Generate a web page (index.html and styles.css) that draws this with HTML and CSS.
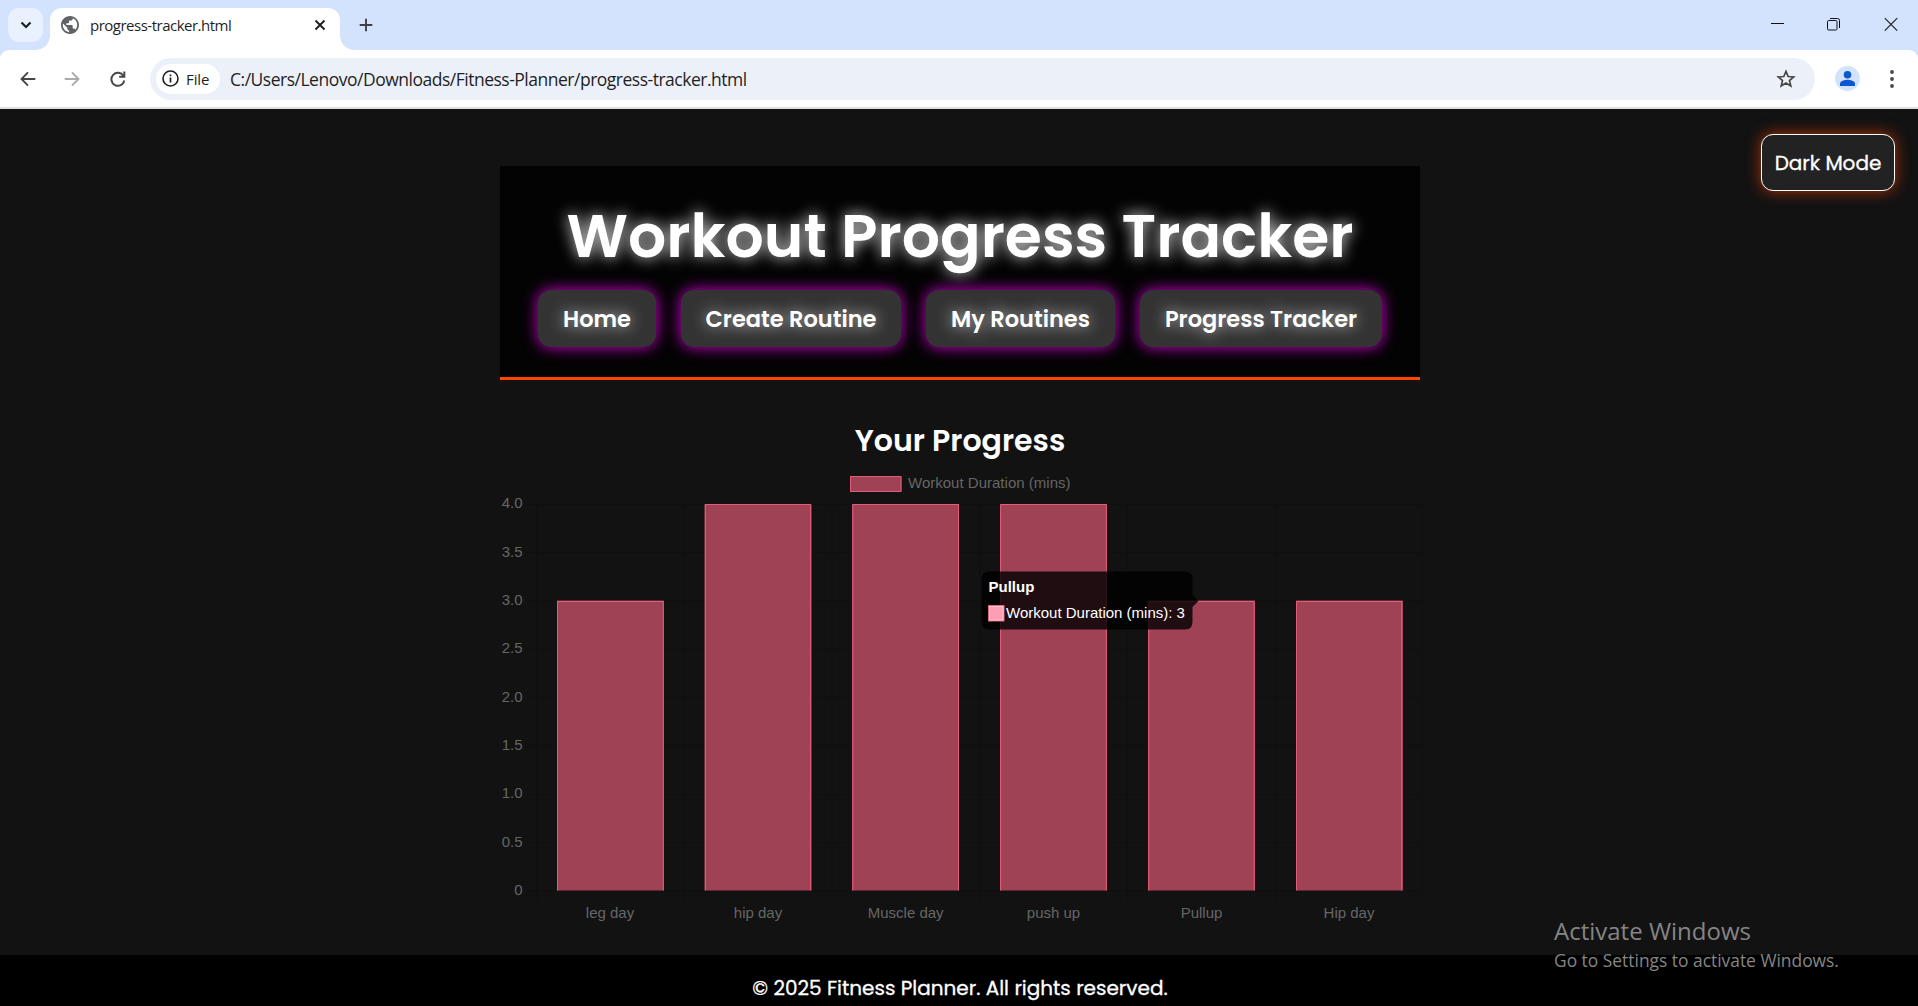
FILE: index.html
```html
<!DOCTYPE html>
<html lang="en">
<head>
<meta charset="utf-8">
<title>progress-tracker.html</title>
<link rel="stylesheet" href="styles.css">
</head>
<body>
<div class="tabstrip">
  <div class="tab-search"><svg width="12" height="8" viewBox="0 0 12 8"><path d="M1.500 1.500 6 6l4.500-4.500" fill="none" stroke="#1f1f1f" stroke-width="2.200"/></svg></div>
  <div class="tab">
    <svg class="globe" width="18" height="18" viewBox="2 2 20 20"><path d="M12 2C6.480 2 2 6.480 2 12s4.480 10 10 10 10-4.480 10-10S17.520 2 12 2zm-1 17.930c-3.950-.49-7-3.850-7-7.930 0-.62.080-1.210.21-1.790L9 15v1c0 1.100.9 2 2 2v1.930zm6.900-2.540c-.26-.81-1-1.390-1.900-1.390h-1v-3c0-.55-.45-1-1-1H8v-2h2c.55 0 1-.45 1-1V7h2c1.100 0 2-.9 2-2v-.41c2.930 1.190 5 4.060 5 7.410 0 2.080-.8 3.970-2.100 5.390z" fill="#5f6368"/></svg>
    <span class="tab-title">progress-tracker.html</span>
    <svg class="tab-close" width="12" height="12" viewBox="0 0 12 12"><path d="M1.500 1.500l9 9m0-9-9 9" stroke="#1f1f1f" stroke-width="1.900"/></svg>
  </div>
  <svg class="plus" width="14" height="14" viewBox="0 0 14 14"><path d="M7 .7v12.600M.7 7h12.600" stroke="#3c4043" stroke-width="1.900"/></svg>
  <div class="window-buttons">
    <svg width="13" height="14" viewBox="0 0 13 14"><path d="M0 6.500h13" stroke="#111" stroke-width="1"/></svg>
    <svg width="13" height="14" viewBox="0 0 13 14"><rect x=".5" y="3.500" width="9.500" height="9.500" rx="1.200" fill="none" stroke="#111"/><path d="M3 1.500h7.500a2 2 0 0 1 2 2V11" fill="none" stroke="#111"/></svg>
    <svg width="14" height="14" viewBox="0 0 14 14"><path d="M.8 1.200l12.400 12.400m0-12.400L.8 13.600" stroke="#222" stroke-width="1.200"/></svg>
  </div>
</div>
<div class="toolbar">
  <svg class="nav-icon back" width="16" height="16" viewBox="0 0 16 16"><path d="M15.300 8H2M8 1.300 1.500 8 8 14.700" fill="none" stroke="#474747" stroke-width="1.900"/></svg>
  <svg class="nav-icon forward" width="16" height="16" viewBox="0 0 16 16"><path d="M.7 8H14M8 1.300 14.500 8 8 14.700" fill="none" stroke="#ababab" stroke-width="1.900"/></svg>
  <svg class="nav-icon reload" width="16" height="16" viewBox="0 0 16 16"><path d="M13.500 5A6.500 6.500 0 1 0 14.300 9.500" fill="none" stroke="#474747" stroke-width="2"/><path d="M14.300.5v5.300H9.200" fill="none" stroke="#474747" stroke-width="2"/></svg>
  <div class="omnibox">
    <div class="chip"><svg width="17" height="17" viewBox="0 0 17 17"><circle cx="8.500" cy="8.500" r="7.500" fill="none" stroke="#1f1f1f" stroke-width="1.600"/><path d="M8.500 7.500v5M8.500 4.500v1.800" stroke="#1f1f1f" stroke-width="1.700"/></svg><span>File</span></div>
    <span class="url">C:/Users/Lenovo/Downloads/Fitness-Planner/progress-tracker.html</span>
    <svg class="star" width="20" height="20" viewBox="0 0 20 20"><path d="M10 2.400l2.200 5.100 5.500.5-4.200 3.600 1.300 5.400L10 14.100 5.200 17l1.300-5.400L2.300 8l5.500-.5z" fill="none" stroke="#474747" stroke-width="1.700"/></svg>
  </div>
  <svg class="avatar" width="25" height="25" viewBox="0 0 25 25"><circle cx="12.500" cy="12.500" r="12.500" fill="#d3e3fd"/><circle cx="12.500" cy="8.700" r="3.800" fill="#0b57d0"/><path d="M5 20v-2.300c0-3 5-4 7.500-4s7.500 1 7.500 4V20z" fill="#0b57d0"/></svg>
  <svg class="kebab" width="4" height="18" viewBox="0 0 4 18"><g fill="#474747"><circle cx="2" cy="2" r="1.900"/><circle cx="2" cy="9" r="1.900"/><circle cx="2" cy="16" r="1.900"/></g></svg>
</div>
<div class="page">
  <button class="theme-toggle"><span>Dark Mode</span></button>
  <header class="hero">
    <h1>Workout Progress Tracker</h1>
    <nav>
      <a class="home">Home</a>
      <a class="create">Create Routine</a>
      <a class="routines">My Routines</a>
      <a class="progress">Progress Tracker</a>
    </nav>
  </header>
  <main>
    <h2>Your Progress</h2>
    <svg class="chart" width="930" height="460" viewBox="500 470 930 460">
      <g class="grid">
        <path d="M527 504.500H1423M527 552.500H1423M527 601H1423M527 649.500H1423M527 697.500H1423M527 746H1423M527 794.500H1423M527 842.500H1423M527 891H1423"/>
        <path d="M537 504V901M684.500 504V901M832 504V901M980 504V901M1127.500 504V901M1275.500 504V901M1422.500 504V901"/>
      </g>
      <g class="bars">
        <rect x="850" y="476" width="51.500" height="16"/>
        <rect x="557" y="600.500" width="107" height="290"/>
        <rect x="704.500" y="504" width="107" height="386.500"/>
        <rect x="852" y="504" width="107" height="386.500"/>
        <rect x="1000" y="504" width="107" height="386.500"/>
        <rect x="1148" y="600.500" width="107" height="290"/>
        <rect x="1296" y="600.500" width="107" height="290"/>
      </g>
      <g class="edges">
        <path d="M850.500 476.500h50.500v15h-50.500z"/>
        <path d="M557.500 890.500V601.500H663.300V890.500"/>
        <path d="M705.400 890.500V504.500H810.600V890.500"/>
        <path d="M852.800 890.500V504.500H958.500V890.500"/>
        <path d="M1000.600 890.500V504.500H1106.300V890.500"/>
        <path d="M1148.700 890.500V601.500H1254.200V890.500"/>
        <path d="M1296.500 890.500V601.500H1401.700V890.500"/>
      </g>
      <g class="labels">
        <text x="908" y="488" textLength="162.500">Workout Duration (mins)</text>
        <g text-anchor="end">
          <text x="522.500" y="508">4.0</text><text x="522.500" y="556.500">3.5</text><text x="522.500" y="605">3.0</text>
          <text x="522.500" y="653">2.5</text><text x="522.500" y="702">2.0</text><text x="522.500" y="750">1.5</text>
          <text x="522.500" y="798">1.0</text><text x="522.500" y="847">0.5</text><text x="522.500" y="895">0</text>
        </g>
        <g text-anchor="middle">
          <text x="610" y="918">leg day</text><text x="758" y="918">hip day</text><text x="905.700" y="918">Muscle day</text>
          <text x="1053.500" y="918">push up</text><text x="1201.500" y="918">Pullup</text><text x="1349" y="918">Hip day</text>
        </g>
      </g>
      <g class="tip">
        <path d="M989 571.500H1185q7.500 0 7.500 7.500V595l6 6-6 6V622q0 7.500-7.500 7.500H989q-7.500 0-7.500-7.500V579q0-7.500 7.500-7.500z" fill="rgba(0,0,0,.8)"/>
        <rect x="988" y="605" width="16" height="16" fill="#ff9eb2"/>
        <rect x="988.500" y="605.500" width="15.500" height="15.500" fill="none" stroke="#e0627c" stroke-width="1"/>
        <rect x="989.500" y="606.500" width="13.500" height="13.500" fill="none" stroke="#ffc4d0" stroke-width="1"/>
        <text x="988.500" y="592" font-weight="700">Pullup</text>
        <text x="1006" y="618">Workout Duration (mins): 3</text>
      </g>
    </svg>
  </main>
  <footer><span>© 2025 Fitness Planner. All rights reserved.</span></footer>
  <div class="activation">
    <div class="act-title">Activate Windows</div>
    <div class="act-text">Go to Settings to activate Windows.</div>
  </div>
</div>
</body>
</html>
```
FILE: styles.css
```css
* { box-sizing: border-box; }
body { margin: 0; width: 1918px; height: 1006px; overflow: hidden; display: flex; flex-direction: column; background: #d3e3fd; font-family: "Poppins", "Inter", sans-serif; color: #fff; }
svg { display: block; flex: none; }
.tabstrip { height: 50px; flex: none; display: flex; align-items: flex-start; padding-left: 8px; background: #d3e3fd; }
.tab-search { width: 35px; height: 34px; margin-top: 8px; border-radius: 11px; background: #e9f0fe; display: flex; align-items: center; justify-content: center; }
.tab { position: relative; width: 290px; height: 42px; margin: 8px 0 0 7px; padding: 0 14px 8px 11px; background: #fff; border-radius: 12px 12px 0 0; display: flex; align-items: center; }
.tab::before, .tab::after { content: ""; position: absolute; bottom: 0; width: 14px; height: 14px; }
.tab::before { left: -14px; background: radial-gradient(circle at 0 0, transparent 13.5px, #fff 14px); }
.tab::after { right: -14px; background: radial-gradient(circle at 100% 0, transparent 13.5px, #fff 14px); }
.tab-title { margin-left: 11px; flex: 1; color: #1f1f1f; font: 15px/20px "Open Sans", sans-serif; letter-spacing: -.5px; white-space: nowrap; }
.plus { margin: 18px 0 0 19px; }
.window-buttons { margin: 17px 20px 0 auto; display: flex; gap: 43px; }
.window-buttons svg:not(:last-child) { transform: translateX(-1px); }
.toolbar { height: 59px; flex: none; display: flex; align-items: center; background: #fff; border-bottom: 2px solid #dfe1e1; border-radius: 9px 9px 0 0; }
.back { margin-left: 20px; }
.forward { margin-left: 28px; }
.reload { margin-left: 30px; }
.omnibox { width: 1665px; height: 42px; margin-left: 24px; padding: 0 19px 0 6px; border-radius: 21px; background: #ecf0f9; display: flex; align-items: center; }
.chip { width: 64px; height: 30px; border-radius: 15px; background: #fff; display: flex; align-items: center; padding-left: 6px; gap: 7px; color: #1f1f1f; font: 500 15px/20px "Open Sans", sans-serif; letter-spacing: -.1px; }
.url { margin-left: 10px; flex: 1; color: #1f1f1f; font: 17.5px/24px "Open Sans", sans-serif; letter-spacing: -.49px; white-space: nowrap; }
.avatar { margin-left: 20px; }
.kebab { margin-left: 30px; }
.page { position: relative; flex: 1; background: #121212; display: flex; flex-direction: column; align-items: center; overflow: hidden; }
.theme-toggle { position: absolute; left: 1761px; top: 25px; width: 134px; height: 57px; padding: 1px 0 0; border: 1px solid #fff; border-radius: 12px; background: #222; box-shadow: 0 0 15px rgba(255, 69, 0, .65); color: #fff; font: 400 20px/30px "Poppins", "Inter", sans-serif; -webkit-text-stroke: .3px #fff; }
.hero { width: 920px; height: 214px; flex: none; margin: 57px 0 0 2px; padding-top: 33px; background: #030303; border-bottom: 3px solid #ff4500; display: flex; flex-direction: column; align-items: center; }
h1 { margin: 0; font-size: 60px; line-height: 74px; font-weight: 600; white-space: nowrap; text-shadow: 0 0 15px rgba(255, 255, 255, .9); }
nav { display: flex; gap: 25px; margin-top: 17px; }
nav a { height: 57px; border-radius: 13px; background: #333; box-shadow: 0 0 15px #d000d0; display: flex; align-items: center; justify-content: center; font-size: 22.5px; font-weight: 600; white-space: nowrap; text-shadow: 0 0 15px rgba(255, 255, 255, .75); }
.home { width: 118px; }
.create { width: 220px; }
.routines { width: 189px; }
.progress { width: 242px; }
main { width: 930px; margin-left: 12px; flex: none; }
h2 { margin: 40px 10px 0 0; height: 50px; line-height: 42px; text-align: center; font-size: 30px; font-weight: 600; }
.grid path { fill: none; stroke: #0f0f0f; stroke-width: 1; }
.bars rect { fill: #a04256; }
.edges path { fill: none; stroke: #e65c78; stroke-width: 1; }
.labels text { fill: #666; }
.labels, .tip { font: 15px "Liberation Sans", Arial, sans-serif; }
.tip text { fill: #fff; }
footer { width: 1918px; height: 52px; margin-top: 25px; flex: none; background: #000; text-align: center; font-size: 20px; font-weight: 400; line-height: 67px; padding-left: 2px; -webkit-text-stroke: .3px #fff; }
.activation { position: absolute; left: 1554px; top: 804px; color: #858585; font-family: "Open Sans", sans-serif; white-space: nowrap; }
.act-title { font-size: 24px; line-height: 36px; }
.act-text { font-size: 17.4px; line-height: 22px; }
```
